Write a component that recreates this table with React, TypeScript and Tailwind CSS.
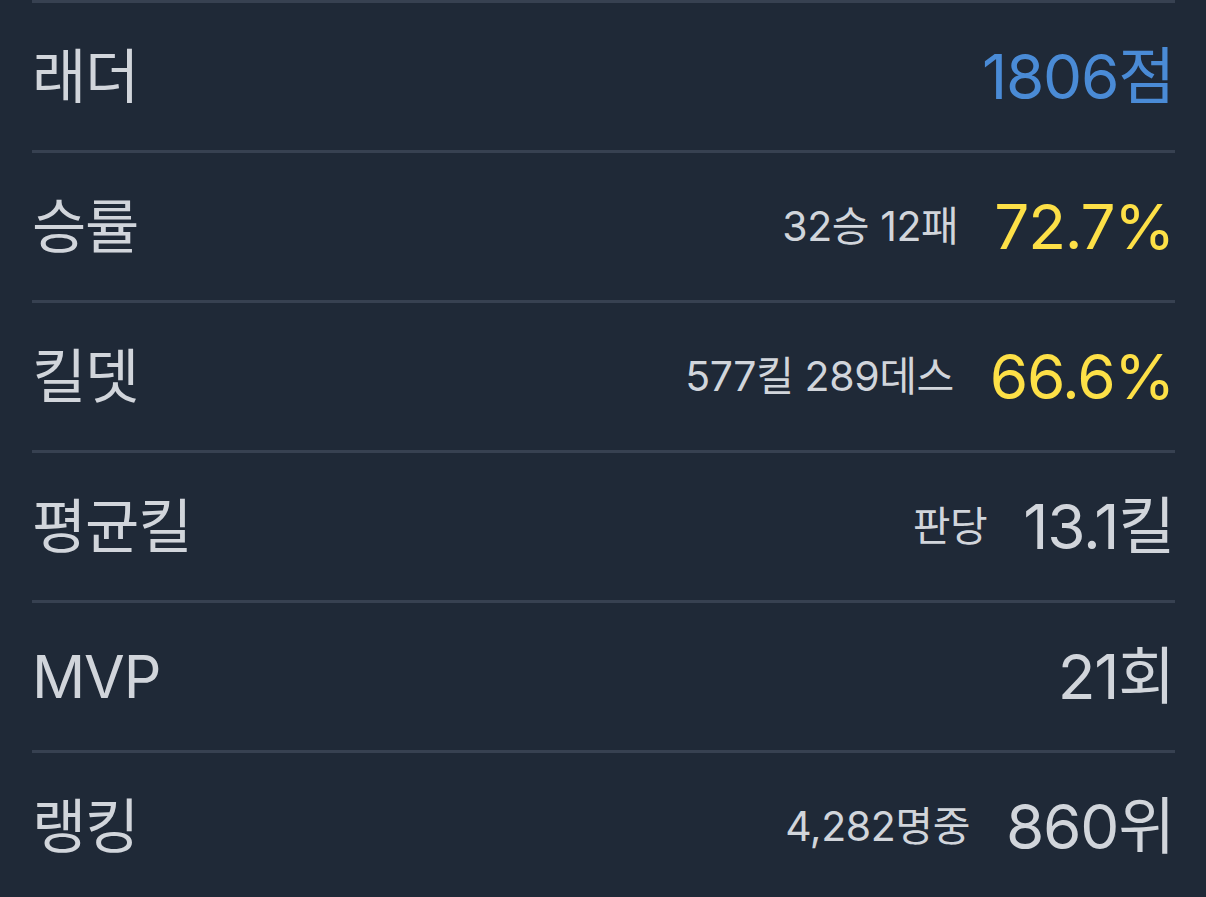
interface StatRow {
  label: string
  sub?: string
  value: string
  tone: 'blue' | 'yellow' | 'plain'
}

const rows: StatRow[] = [
  { label: '래더', value: '1806점', tone: 'blue' },
  { label: '승률', sub: '32승 12패', value: '72.7%', tone: 'yellow' },
  { label: '킬뎃', sub: '577킬 289데스', value: '66.6%', tone: 'yellow' },
  { label: '평균킬', sub: '판당', value: '13.1킬', tone: 'plain' },
  { label: 'MVP', value: '21회', tone: 'plain' },
  { label: '랭킹', sub: '4,282명중', value: '860위', tone: 'plain' },
]

const toneClass = {
  blue: 'text-[#4a8bd6]',
  yellow: 'text-[#fde047]',
  plain: 'text-[#d1d5db]',
}

export default function App() {
  return (
    <div
      className="min-h-screen bg-[#1f2937] overflow-hidden"
      style={{ fontFamily: '"Inter", "Noto Sans CJK KR", sans-serif' }}
    >
      <div className="ml-8 mr-[31px] border-t-[3px] border-[#374151]">
        {rows.map((row) => (
          <div
            key={row.label}
            className="flex items-center justify-between h-[150px] border-b-[3px] border-[#374151]"
          >
            <span className="text-[59px] leading-none text-[#d1d5db] tracking-[-0.02em]">{row.label}</span>
            <div className="flex items-center gap-[36px] pr-px">
              {row.sub && (
                <span className="text-[41px] leading-none text-[#d1d5db] tracking-[-0.01em]">{row.sub}</span>
              )}
              <span className={`text-[62px] leading-none tracking-[-0.02em] ${toneClass[row.tone]}`}>
                {row.value}
              </span>
            </div>
          </div>
        ))}
      </div>
    </div>
  )
}
